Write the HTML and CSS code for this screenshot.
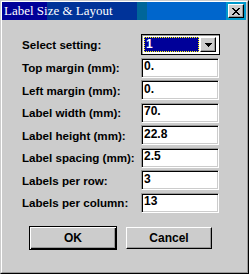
FILE: index.html
```html
<!DOCTYPE html>
<html lang="en">
<head>
  <meta charset="UTF-8">
  <meta name="viewport" content="width=device-width, initial-scale=1.0">
  <title>Label Size &amp; Layout</title>
  <link rel="stylesheet" href="styles.css">
</head>
<body>
<div class="window">
  <div class="frame">
    <div class="titlebar">
      <span class="title">Label Size &amp; Layout</span>
      <button class="close-btn" aria-label="Close">
        <svg width="8" height="7" viewBox="0 0 8 7" shape-rendering="crispEdges">
          <path fill="#000" d="M0 0h2v1H0z M6 0h2v1H6z M1 1h2v1H1z M5 1h2v1H5z M2 2h4v1H2z M3 3h2v1H3z M2 4h4v1H2z M1 5h2v1H1z M5 5h2v1H5z M0 6h2v1H0z M6 6h2v1H6z"/>
        </svg>
      </button>
    </div>

    <div class="content">
      <div class="form">
        <label class="field-label">Select setting:</label>
        <div class="combo">
          <span class="combo-value"><span class="combo-text">1</span></span>
          <span class="combo-btn">
            <svg width="7" height="4" viewBox="0 0 7 4" shape-rendering="crispEdges">
              <path fill="#000" d="M0 0h7v1H0z M1 1h5v1H1z M2 2h3v1H2z M3 3h1v1H3z"/>
            </svg>
          </span>
        </div>

        <label class="field-label">Top margin (mm):</label>
        <input class="field" type="text" value="0.">

        <label class="field-label">Left margin (mm):</label>
        <input class="field" type="text" value="0.">

        <label class="field-label">Label width (mm):</label>
        <input class="field" type="text" value="70.">

        <label class="field-label">Label height (mm):</label>
        <input class="field" type="text" value="22.8">

        <label class="field-label">Label spacing (mm):</label>
        <input class="field" type="text" value="2.5">

        <label class="field-label">Labels per row:</label>
        <input class="field" type="text" value="3">

        <label class="field-label">Labels per column:</label>
        <input class="field" type="text" value="13">
      </div>

      <div class="actions">
        <button class="btn btn-default">OK</button>
        <button class="btn btn-cancel">Cancel</button>
      </div>
    </div>
  </div>
</div>
</body>
</html>
```

FILE: styles.css
```css
body {
  margin: 0;
  background-color: #cccccc;
  font-family: "Liberation Sans", Arial, sans-serif;
}

.window {
  box-sizing: border-box;
  width: 249px;
  height: 274px;
  border: 1px solid;
  border-color: #cccccc #000 #000 #cccccc;
  background-color: #cccccc;
}

.frame {
  box-sizing: border-box;
  height: 100%;
  border: 1px solid;
  border-color: #fff #999 #999 #fff;
  padding-right: 1px;
}

.titlebar {
  display: flex;
  align-items: center;
  justify-content: space-between;
  height: 18px;
  padding: 0 2px;
  background: linear-gradient(to right,
    #000099 0, #000099 45px,
    #003399 45px, #003399 135px,
    #006699 135px, #006699 145px,
    #0066cc 145px, #0066cc 224px,
    #0099cc 224px);
}

.title {
  font-family: "Liberation Serif", "Times New Roman", serif;
  font-size: 13px;
  line-height: 18px;
  color: #fff;
}

.close-btn {
  display: flex;
  align-items: center;
  justify-content: center;
  box-sizing: border-box;
  width: 16px;
  height: 14px;
  padding: 0;
  border: 1px solid;
  border-color: #fff #000 #000 #fff;
  box-shadow: inset -1px -1px #999;
  background-color: #cccccc;
}

.content {
  padding: 14px 0 0 20px;
}

.form {
  display: grid;
  grid-template-columns: 119px 78px;
  grid-template-rows: 21px;
  grid-auto-rows: 20px;
  row-gap: 2.5px;
  align-items: center;
}

.field-label {
  font-weight: bold;
  font-size: 11.6px;
  line-height: 13px;
  color: #000;
  white-space: nowrap;
}

.combo {
  display: flex;
  gap: 1px;
  box-sizing: border-box;
  width: 79px;
  height: 21px;
  padding: 1px 2px 1px 1px;
  border: 1px solid #000;
  box-shadow: inset 1px 1px #999, inset -1px -1px #fff;
  background-color: #fff;
}

.combo-value {
  box-sizing: border-box;
  width: 55px;
  height: 15px;
  margin: 1px 0 0 1px;
  border: 1px dotted #ffff00;
  background-color: #000099;
}

.combo-text {
  display: block;
  padding-left: 1px;
  font-weight: bold;
  font-size: 12px;
  line-height: 12px;
  color: #fff;
}

.combo-btn {
  display: flex;
  align-items: center;
  justify-content: center;
  box-sizing: border-box;
  width: 16px;
  height: 15px;
  margin-top: 1px;
  border: 1px solid;
  border-color: #fff #000 #000 #fff;
  box-shadow: inset -1px -1px #999;
  background-color: #cccccc;
}

.field {
  box-sizing: border-box;
  width: 78px;
  height: 20px;
  margin: 0;
  padding: 1px 1px 4px 2px;
  border: 1px solid;
  border-color: #999 #fff #fff #999;
  box-shadow: inset 1px 1px #000, inset -1px -1px #cccccc;
  background-color: #fff;
  font-family: "Liberation Sans", Arial, sans-serif;
  font-weight: bold;
  font-size: 12px;
  line-height: 13px;
  color: #000;
  outline: none;
}

.actions {
  display: flex;
  align-items: flex-start;
  gap: 9px;
  margin-top: 13.5px;
  padding-left: 7px;
}

.btn {
  box-sizing: border-box;
  height: 24px;
  padding: 0;
  border: 1px solid;
  border-color: #fff #000 #000 #fff;
  box-shadow: inset -1px -1px #999;
  background-color: #cccccc;
  font-family: "Liberation Sans", Arial, sans-serif;
  font-weight: bold;
  font-size: 12px;
  color: #000;
}

.btn-default {
  width: 88px;
  border-color: #000;
  box-shadow: inset 1px 1px #fff, inset -1px -1px #000, inset -2px -2px #999;
}

.btn-cancel {
  width: 86px;
  height: 22px;
  margin-top: 1px;
}
```
